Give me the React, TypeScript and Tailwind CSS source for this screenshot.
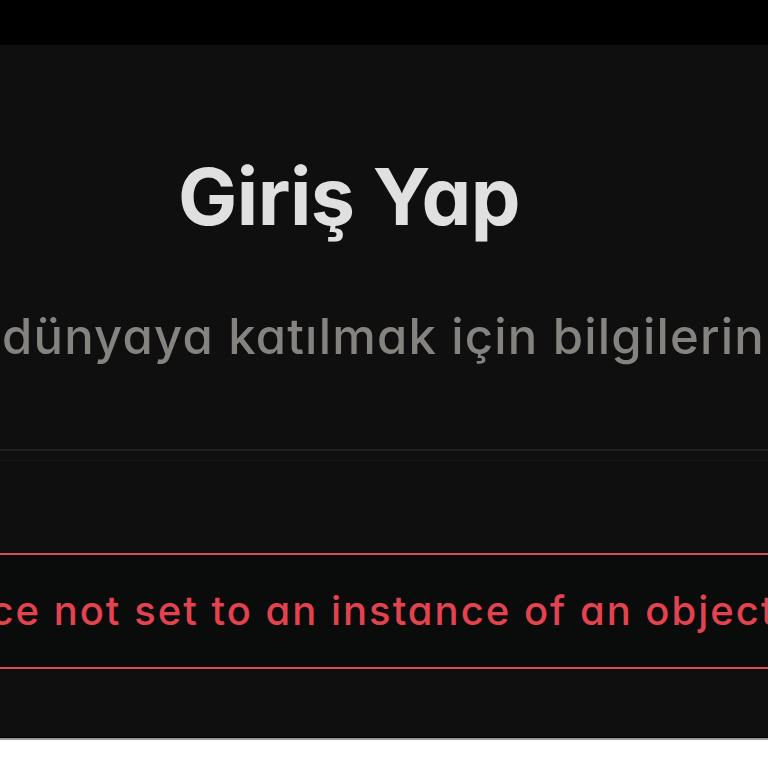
import React from "react";

export default function App() {
  const font = { fontFamily: "Inter, 'Noto Sans', sans-serif", fontFeatureSettings: '"cv11"' } as React.CSSProperties;
  return (
    <div className="w-[768px] h-[768px] overflow-hidden bg-white flex flex-col" style={font}>
      <div className="h-[45px] shrink-0 bg-black" />
      <div className="h-[692px] shrink-0 bg-[#0f0f0f] flex flex-col overflow-hidden">
        <div className="w-[1400px] ml-[-351px] flex flex-col items-center">
          <h1 className="mt-[112px] text-[79px] leading-none font-bold text-[#e0e0e0] tracking-[-0.5px] whitespace-nowrap">
            Giriş Yap
          </h1>
        </div>
        <p className="mt-[76px] ml-[2px] text-[49px] leading-none font-medium tracking-[1.2px] text-[#858380] whitespace-nowrap">
          dünyaya katılmak için bilgilerini gir
        </p>
        <div className="mt-[88px] h-[2px] bg-[#202020]" />
        <div className="mt-[9px] h-px bg-[#151515]" />
        <div className="mt-[92px] h-[116px] shrink-0 border-y-2 border-[#dc4a58] bg-[#0a0c0b] flex items-center overflow-hidden">
          <span className="ml-[-312px] text-[40px] leading-none font-medium tracking-[2px] text-[#e3434f] whitespace-nowrap">
            Object reference not set to an instance of an object.
          </span>
        </div>
      </div>
      <div className="h-px bg-black" />
      <div className="h-[2px] bg-[#9a9a9a]" />
      <div className="flex-1 bg-white" />
    </div>
  );
}
